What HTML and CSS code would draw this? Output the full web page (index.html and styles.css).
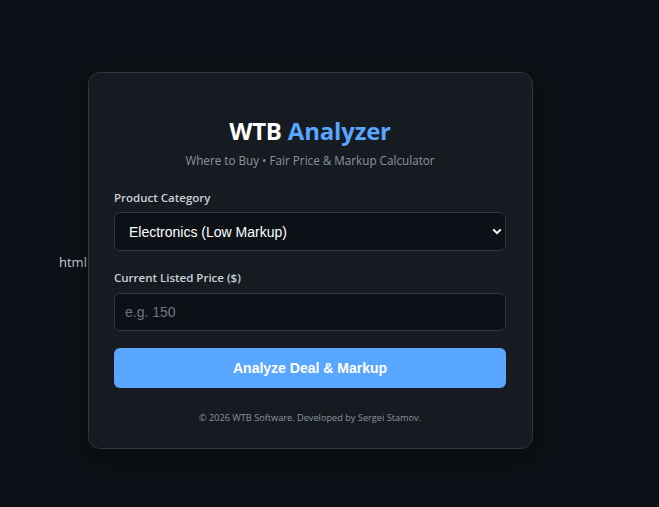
FILE: index.html
```html
<!DOCTYPE html>
<html lang="en">
<head>
<meta charset="utf-8">
<title>WTB Analyzer</title>
<link rel="stylesheet" href="styles.css">
</head>
<body>
<div class="stage">
  <span class="stray">html</span>
  <main class="card">
    <h1 class="title">WTB <span class="accent">Analyzer</span></h1>
    <p class="subtitle">Where to Buy • Fair Price &amp; Markup Calculator</p>
    <label class="label" for="category">Product Category</label>
    <div class="select-wrap">
      <select id="category" class="field select">
        <option>Electronics (Low Markup)</option>
        <option>Clothing (High Markup)</option>
        <option>Furniture (Medium Markup)</option>
      </select>
      <svg class="chevron" width="10" height="7" viewBox="0 0 10 7" aria-hidden="true"><path d="M1.2 1.4 L5 5.2 L8.8 1.4" fill="none" stroke="#ffffff" stroke-width="2"/></svg>
    </div>
    <label class="label label-2" for="price">Current Listed Price ($)</label>
    <input id="price" class="field input" type="text" placeholder="e.g. 150">
    <button class="btn" type="button">Analyze Deal &amp; Markup</button>
    <p class="footer">© 2026 WTB Software. Developed by Sergei Stamov.</p>
  </main>
</div>
</body>
</html>
```

FILE: styles.css
```css
* { box-sizing: border-box; }

html, body {
  margin: 0;
  height: 100%;
}

body {
  background: #0d1117;
  font-family: "Open Sans", "Noto Sans", sans-serif;
  color: #c9d1d9;
}

.stage {
  display: flex;
  align-items: center;
  padding: 72px 0 0 59px;
}

.stray {
  font-size: 13px;
  color: #c9d1d9;
  width: 29px;
  margin-top: 2px;
}

.card {
  width: 445px;
  height: 377px;
  background: #161b22;
  border: 1px solid #30363d;
  border-radius: 12px;
  padding: 42px 26px 0 25px;
  box-shadow: 0 8px 28px rgba(0, 0, 0, 0.45);
  display: flex;
  flex-direction: column;
}

.title {
  margin: 0;
  text-align: center;
  font-size: 24px;
  line-height: 32px;
  font-weight: 700;
  color: #ffffff;
  letter-spacing: -0.2px;
}

.accent { color: #58a6ff; }

.subtitle {
  margin: 5px 0 0;
  text-align: center;
  font-size: 11.7px;
  line-height: 16px;
  color: #8b949e;
}

.label {
  display: block;
  margin-top: 22px;
  font-size: 11.5px;
  line-height: 16px;
  font-weight: 600;
  color: #c9d1d9;
}

.label-2 { margin-top: 19px; }

.select-wrap {
  position: relative;
  margin-top: 6px;
}

.field {
  display: block;
  width: 100%;
  height: 39px;
  background: #0d1117;
  border: 1px solid #30363d;
  border-radius: 6px;
  font-family: "Liberation Sans", Arial, sans-serif;
  font-size: 14px;
  color: #ffffff;
  outline: none;
}

.select {
  appearance: none;
  -webkit-appearance: none;
  padding: 0 30px 0 14px;
}

.chevron {
  position: absolute;
  right: 4px;
  top: 16px;
}

.input {
  margin-top: 7px;
  height: 38px;
  padding: 0 10px;
}

.input::placeholder { color: #6e7681; }

.btn {
  margin-top: 17px;
  height: 40px;
  width: 100%;
  border: none;
  border-radius: 6px;
  background: #58a6ff;
  color: #ffffff;
  font-family: "Liberation Sans", Arial, sans-serif;
  font-size: 14px;
  font-weight: 700;
}

.footer {
  margin: 23px 0 0;
  text-align: center;
  font-size: 9.2px;
  line-height: 14px;
  color: #8b949e;
}
```
